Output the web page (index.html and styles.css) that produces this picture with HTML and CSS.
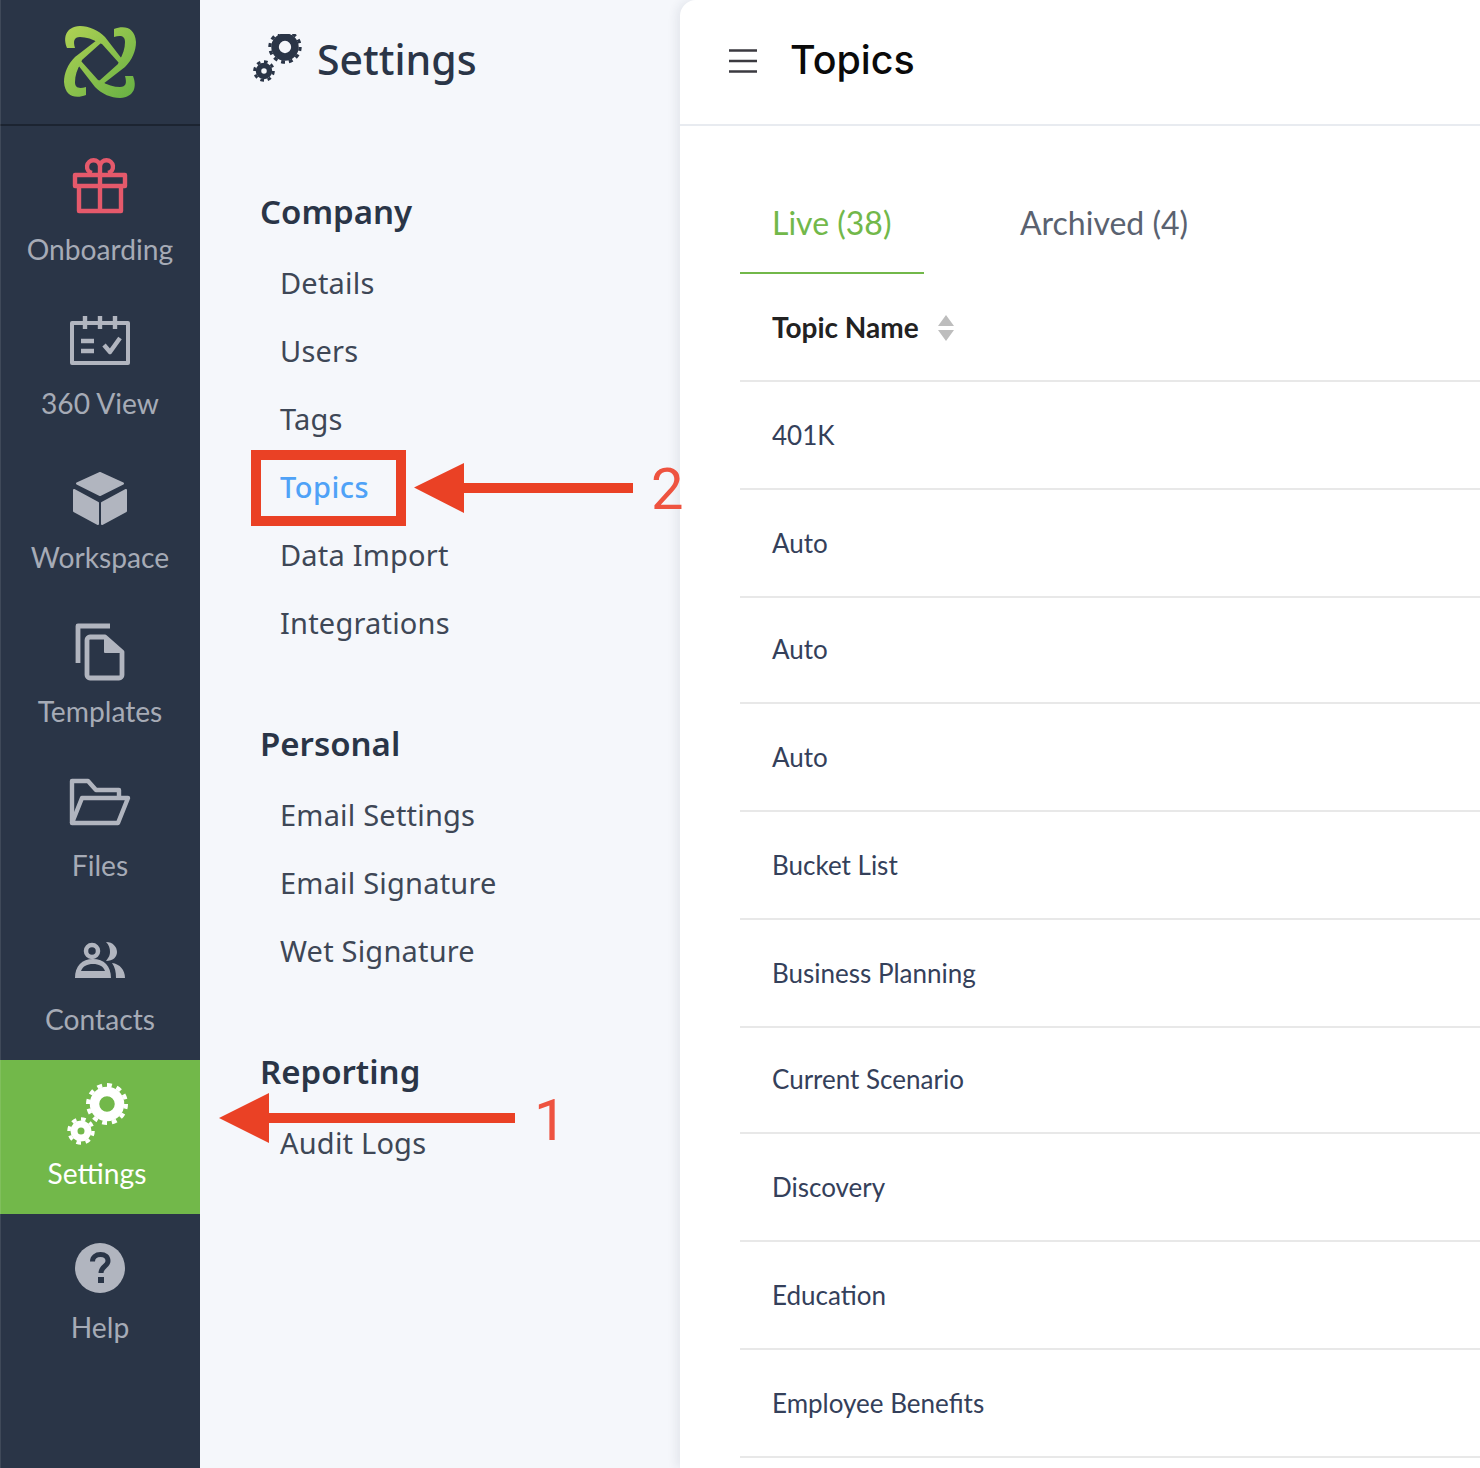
FILE: index.html
```html
<!DOCTYPE html>
<html lang="en">
<head>
<meta charset="utf-8">
<title>Topics</title>
<link rel="stylesheet" href="styles.css">
</head>
<body>
<svg class="defs" width="0" height="0" aria-hidden="true">
  <defs>
    <linearGradient id="lg" x1="0" y1="0" x2="1" y2="1"><stop offset="0" stop-color="#b0d254"/><stop offset="1" stop-color="#66b044"/></linearGradient>
    <symbol id="gear-big" viewBox="0 0 44 44">
      <circle cx="22" cy="22" r="19" fill="none" stroke="currentColor" stroke-width="4" pathLength="24" stroke-dasharray="1 1"/>
      <circle cx="22" cy="22" r="12.500" fill="none" stroke="currentColor" stroke-width="9.500"/>
    </symbol>
    <symbol id="gear-small" viewBox="0 0 28 28">
      <circle cx="14" cy="14" r="12" fill="none" stroke="currentColor" stroke-width="3.500" pathLength="16" stroke-dasharray="1 1"/>
      <circle cx="14" cy="14" r="7" fill="none" stroke="currentColor" stroke-width="7"/>
    </symbol>
  </defs>
</svg>
<div class="app">
  <nav class="rail">
    <div class="brand">
      <svg class="logo" width="72" height="72" viewBox="0 0 72 72" fill="url(#lg)">
        <path d="M3 22C-1 12 1 1 16 0C25 0 34 4 41 11L58 33L55 37L38 18L35 17C29 13 22 11 16 11C10 11 9 15 11 22ZM50 3C60 -1 71 1 72 16C72 25 68 34 61 41L39 58L35 55L54 38L55 35C59 29 61 22 61 16C61 10 57 9 50 11ZM69 50C73 60 71 71 56 72C47 72 38 68 31 61L14 39L17 35L34 54L37 55C43 59 50 61 56 61C62 61 63 57 61 50ZM22 69C12 73 1 71 0 56C0 47 4 38 11 31L33 14L37 17L18 34L17 37C13 43 11 50 11 56C11 62 15 63 22 61Z"/>
      </svg>
    </div>
    <a class="nav-item nav-gift">
      <svg class="nav-icon" width="60" height="60" viewBox="0 0 60 60" fill="none" stroke="currentColor" stroke-width="4.400" stroke-linejoin="round">
        <path d="M5 19H55V30H5ZM9 30H51V55H9ZM30 19V55"/>
        <path d="M30 19V10A6.500 6.500 0 1 0 22 17M30 19V10A6.500 6.500 0 1 1 38 17"/>
      </svg>
      <span class="nav-label">Onboarding</span>
    </a>
    <a class="nav-item">
      <svg class="nav-icon" width="60" height="60" viewBox="0 0 60 60" fill="none" stroke="currentColor" stroke-width="4" stroke-linejoin="round">
        <path d="M2 13H58V53H2Z"/>
        <path d="M15 6V19M30 6V19M45 6V19" stroke-width="4.400"/>
        <path d="M11 31H24M11 41H24" stroke-width="4.400"/>
        <path d="M34 35L40 42L50 28" stroke-width="4.400"/>
      </svg>
      <span class="nav-label">360 View</span>
    </a>
    <a class="nav-item">
      <svg class="nav-icon" width="60" height="60" viewBox="0 -6 60 60" fill="currentColor" stroke="currentColor" stroke-width="2" stroke-linejoin="round">
        <path d="M30 3L53 13.500L30 25L7 13.500Z"/>
        <path d="M4 20L28 33V54L4 41Z"/>
        <path d="M56 20L32 33V54L56 41Z"/>
      </svg>
      <span class="nav-label">Workspace</span>
    </a>
    <a class="nav-item">
      <svg class="nav-icon" width="60" height="60" viewBox="0 -5 60 60" fill="none" stroke="currentColor" stroke-width="4.800" stroke-linejoin="round">
        <path d="M40 3H8V40"/>
        <path d="M35 14H20A3 3 0 0 0 17 17V52A3 3 0 0 0 20 55H49A3 3 0 0 0 52 52V29Z"/>
        <path d="M35 14L52 29H35Z" fill="currentColor" stroke-width="2"/>
      </svg>
      <span class="nav-label">Templates</span>
    </a>
    <a class="nav-item">
      <svg class="nav-icon" width="60" height="60" viewBox="0 0 60 60" fill="none" stroke="currentColor" stroke-width="4.400" stroke-linejoin="round">
        <path d="M2 51V9H18L26 18H49V26"/>
        <path d="M2 51L12 26H58L48 51Z"/>
      </svg>
      <span class="nav-label">Files</span>
    </a>
    <a class="nav-item">
      <svg class="nav-icon" width="60" height="60" viewBox="0 0 60 60" fill="currentColor">
        <circle cx="22" cy="25" r="6" fill="none" stroke="currentColor" stroke-width="4.500"/>
        <path d="M36 16C43 16 47 21 47 26C47 31 43 35 36 35C39 31 40 29 40 26C40 22 39 19 36 16Z"/>
        <path fill-rule="evenodd" d="M5 52C5 40 12 33 23 33C34 33 41 40 41 52ZM11 45H35C33 40 29 38 23 38C17 38 13 40 11 45Z"/>
        <path d="M42 37C50 38 55 44 55 52H46C46 46 45 41 42 37Z"/>
      </svg>
      <span class="nav-label">Contacts</span>
    </a>
    <a class="nav-item nav-active">
      <svg class="nav-icon" width="60" height="60" viewBox="0 0 60 60">
        <use href="#gear-big" x="15" y="2" width="44" height="44"/>
        <use href="#gear-small" x="-3" y="37" width="28" height="28"/>
      </svg>
      <span class="nav-label nav-label-active">Settings</span>
    </a>
    <a class="nav-item">
      <svg class="nav-icon" width="60" height="60" viewBox="0 -4 60 60">
        <circle cx="30" cy="30" r="25" fill="currentColor"/>
        <path d="M22.500 23.500C22.500 19 26 16.500 30.500 16.500C35 16.500 38 19 38 23C38 28 31 28.500 31 35" fill="none" stroke="#2a3547" stroke-width="5"/>
        <rect x="28" y="39" width="6" height="6" fill="#2a3547"/>
      </svg>
      <span class="nav-label">Help</span>
    </a>
  </nav>

  <aside class="menu">
    <header class="menu-head">
      <svg class="menu-gears" width="50" height="50" viewBox="0 0 50 50">
        <use href="#gear-big" x="15.500" y="-4.500" width="35" height="35"/>
        <use href="#gear-small" x="1" y="26" width="22" height="22"/>
      </svg>
      <h1 class="menu-title">Settings</h1>
    </header>
    <section class="group">
      <h2 class="group-title">Company</h2>
      <a class="menu-link">Details</a>
      <a class="menu-link">Users</a>
      <a class="menu-link">Tags</a>
      <a class="menu-link menu-link-active">Topics</a>
      <a class="menu-link">Data Import</a>
      <a class="menu-link">Integrations</a>
    </section>
    <section class="group">
      <h2 class="group-title">Personal</h2>
      <a class="menu-link">Email Settings</a>
      <a class="menu-link">Email Signature</a>
      <a class="menu-link">Wet Signature</a>
    </section>
    <section class="group">
      <h2 class="group-title">Reporting</h2>
      <a class="menu-link">Audit Logs</a>
    </section>
  </aside>

  <main class="panel">
    <header class="panel-head">
      <svg class="burger" width="28" height="26" viewBox="0 0 28 26" fill="none" stroke="#3b3a40" stroke-width="2.400">
        <path d="M0 2.500H28M0 13H28M0 23.500H28"/>
      </svg>
      <h1 class="panel-title">Topics</h1>
    </header>
    <div class="tabs">
      <a class="tab tab-active">Live (38)</a>
      <a class="tab">Archived (4)</a>
    </div>
    <div class="table">
      <div class="row row-head">
        <span>Topic Name</span>
        <svg class="sort" width="16" height="26" viewBox="0 0 16 26" fill="#bdbdbd"><path d="M8 0L16 11H0ZM0 15H16L8 26Z"/></svg>
      </div>
      <div class="row"><span class="cell">401K</span></div>
      <div class="row"><span class="cell">Auto</span></div>
      <div class="row row-short"><span class="cell">Auto</span></div>
      <div class="row"><span class="cell">Auto</span></div>
      <div class="row"><span class="cell">Bucket List</span></div>
      <div class="row"><span class="cell">Business Planning</span></div>
      <div class="row row-short"><span class="cell">Current Scenario</span></div>
      <div class="row"><span class="cell">Discovery</span></div>
      <div class="row"><span class="cell">Education</span></div>
      <div class="row"><span class="cell">Employee Benefits</span></div>
    </div>
  </main>

  <div class="callout-box"></div>
  <svg class="arrow arrow-two" width="220" height="50" viewBox="0 0 220 50" fill="#ea4125"><path d="M0 24.500L50 0V20H219V30H50V50Z"/></svg>
  <span class="callout-num callout-num-two">2</span>
  <svg class="arrow arrow-one" width="297" height="50" viewBox="0 0 297 50" fill="#ea4125"><path d="M0 25L50 0V20H296V30H50V50Z"/></svg>
  <span class="callout-num callout-num-one">1</span>
</div>
</body>
</html>
```
FILE: styles.css
```css
* { box-sizing: border-box; }
html, body { margin: 0; padding: 0; height: 100%; overflow: hidden; }
body { font-family: Lato, "Liberation Sans", sans-serif; background: #f5f7fb; }
.defs { position: absolute; }
.app { position: relative; display: flex; width: 1480px; height: 1468px; overflow: hidden; }

.rail { position: relative; flex: 0 0 200px; background: #2a3547; display: flex; flex-direction: column; }
.rail::after { content: ""; position: absolute; left: 0; top: 0; bottom: 0; width: 1px; background: rgba(255,255,255,.1); }
.brand { height: 126px; margin-bottom: 10px; display: flex; align-items: center; justify-content: center; border-bottom: 2px solid #1c2431; }
.logo { display: block; overflow: visible; }
.nav-item { height: 154px; display: flex; flex-direction: column; align-items: center; color: #b1b5bf; padding-top: 20px; }
.nav-gift { color: #e5596b; }
.nav-active { background: #72b84a; color: #fff; }
.nav-icon { display: block; flex: none; overflow: visible; }
.nav-label { margin-top: 13px; font-size: 28.200px; line-height: 40px; color: #a6abb6; }
.nav-label-active { color: #fff; margin-left: -6px; }

.menu { flex: 0 0 480px; padding-left: 60px; font-family: "Noto Sans", Lato, sans-serif; }
.menu-head { height: 122px; display: flex; align-items: center; margin-left: -8px; }
.menu-gears { margin-right: 15px; margin-top: -4px; color: #2a3547; }
.menu-title { margin: -5px 0 0; font-size: 41px; font-weight: 500; line-height: 50px; color: #2a3547; }
.group { display: flex; flex-direction: column; margin-top: 54px; }
.group + .group { margin-top: 50px; }
.group-title { margin: 0 0 2px; height: 72px; line-height: 71px; font-size: 33px; font-weight: 600; color: #2a3547; }
.menu-link { display: block; height: 68px; line-height: 66px; padding-left: 20px; font-size: 29px; letter-spacing: .2px; color: #3e4756; }
.menu-link-active { color: #4fa2f7; font-weight: 500; letter-spacing: .5px; }

.panel { flex: 1; min-width: 0; background: #fff; border-top-left-radius: 16px; box-shadow: -4px 0 10px rgba(42,53,71,.08); }
.panel-head { height: 126px; display: flex; align-items: center; padding-left: 49px; border-bottom: 2px solid #e8ebf0; }
.burger { flex: none; margin-right: 34px; margin-top: -3px; }
.panel-title { margin: -4px 0 0 -1px; font-family: Inter, sans-serif; font-size: 39.400px; font-weight: 500; color: #0a0a0a; }
.tabs { display: flex; margin-left: 60px; height: 148px; }
.tab { width: 184px; height: 148px; padding: 74px 0 0 32px; font-size: 32px; line-height: 46px; color: #5a6270; white-space: nowrap; }
.tab + .tab { margin-left: 64px; }
.tab-active { color: #72b84a; border-bottom: 2px solid #72b84a; }
.table { margin-left: 60px; }
.row { height: 108px; display: flex; align-items: center; padding-left: 32px; border-bottom: 2px solid #e8e8e8; font-size: 26px; color: #34405a; }
.row-short { height: 106px; padding-bottom: 2px; }
.row-head { font-weight: 700; font-size: 28px; color: #222; height: 108px; }
.sort { margin-left: 19px; margin-top: 2px; flex: none; }

.callout-box { position: absolute; left: 251px; top: 450px; width: 155px; height: 76px; border: 10px solid #ea4125; }
.arrow { position: absolute; display: block; }
.arrow-two { left: 414px; top: 463px; }
.arrow-one { left: 219px; top: 1093px; }
.callout-num { position: absolute; font-family: Roboto, sans-serif; font-size: 58px; line-height: 60px; color: #ee5340; }
.callout-num-two { left: 651px; top: 459px; }
.callout-num-one { left: 534px; top: 1090px; }
```
